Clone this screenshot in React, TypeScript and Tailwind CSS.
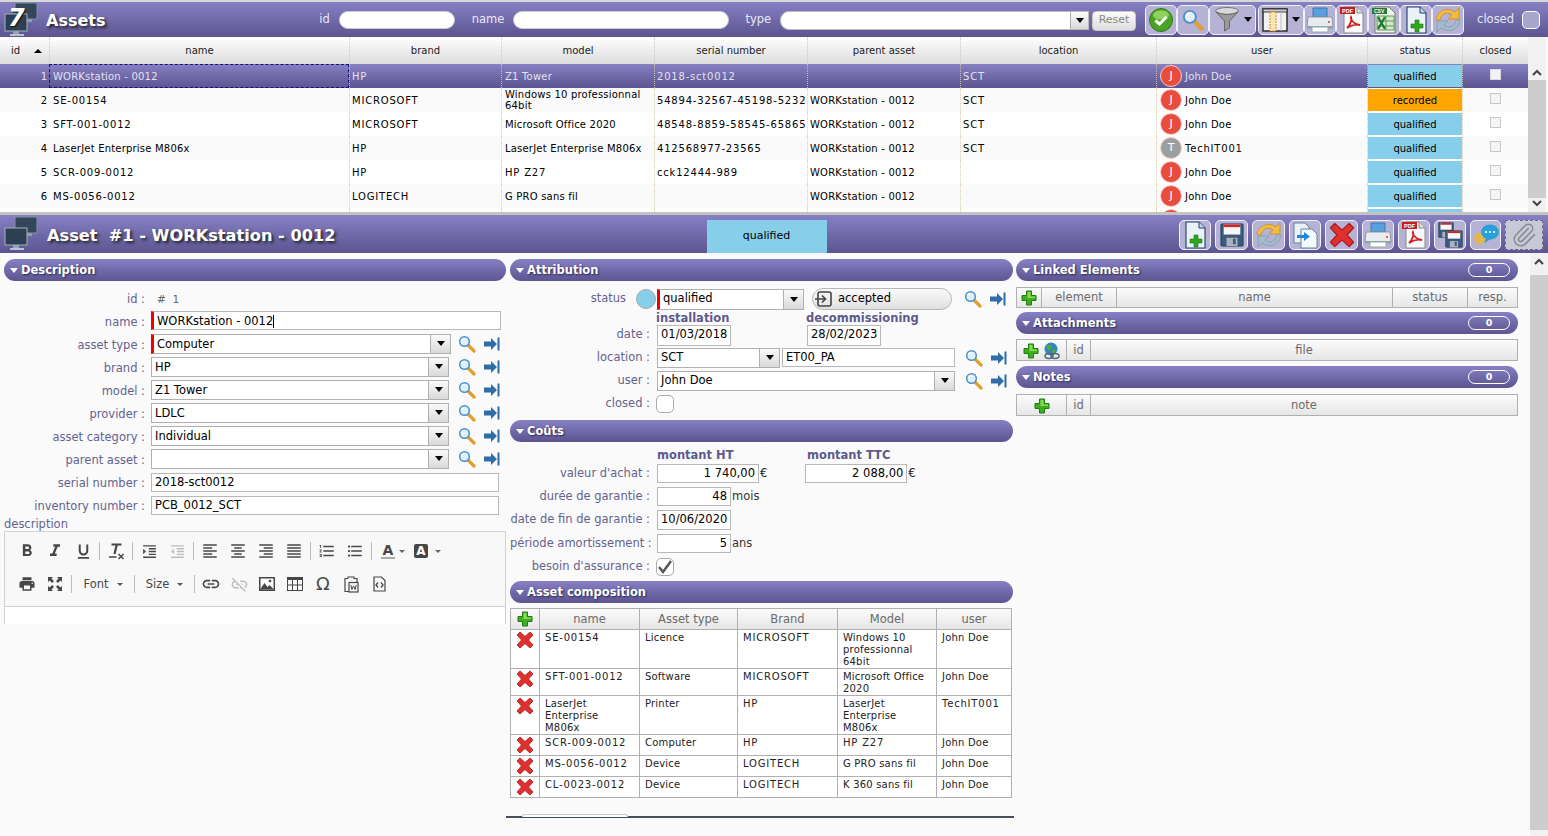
import React from "react";
import {
  MdFormatBold, MdFormatItalic, MdFormatUnderlined, MdFormatIndentIncrease, MdFormatIndentDecrease,
  MdFormatAlignLeft, MdFormatAlignCenter, MdFormatAlignRight, MdFormatAlignJustify, MdFormatListNumbered, MdFormatListBulleted,
  MdPrint, MdLink, MdLinkOff,
} from "react-icons/md";
import { Paperclip } from "lucide-react";

const grad = "bg-gradient-to-b from-[#8780c4] to-[#5c5590]";
const sectionShadow = "[text-shadow:1px_1px_2px_#2a2650]";

function T({ children }: { children: string }) {
  const n = (children.match(/[A-Z0-9]/g) || []).length;
  const ratio = children.length ? n / children.length : 0;
  return <span style={{ letterSpacing: ratio > 0.6 ? "0.8px" : "0.2px" }} className="whitespace-pre-line">{children}</span>;
}

function Monitors({ seven }: { seven?: boolean }) {
  return (
    <div className="relative w-[38px] h-[36px] shrink-0">
      <svg width="38" height="36" viewBox="0 0 38 36">
        <rect x="13" y="1" width="22" height="16" fill="#33465a" stroke="#7f93a3" />
        <rect x="24" y="17" width="6" height="3" fill="#8f9dab" />
        <rect x="3" y="12" width="22" height="17" fill="#2d3f52" stroke="#a4b2bd" />
        <rect x="11" y="29" width="6" height="3" fill="#9aa6b1" />
        <rect x="8" y="32" width="14" height="2" fill="#b8c2ca" />
      </svg>
      {seven && (
        <span className="absolute left-[6px] top-[3px] text-[24px] leading-[26px] italic font-bold text-white [text-shadow:1px_1px_1px_#111]">7</span>
      )}
    </div>
  );
}

const SearchIcon = () => (
  <svg width="18" height="18" viewBox="0 0 18 18" className="shrink-0">
    <path d="M10 10 L16 16" stroke="#e0a030" strokeWidth="3.2" strokeLinecap="round" />
    <circle cx="6.5" cy="6.5" r="4.8" fill="#dff0fb" stroke="#4a8fcb" strokeWidth="1.5" />
    <path d="M3.8 6 a3 3 0 0 1 2.8 -2.4" stroke="#fff" strokeWidth="1.3" fill="none" />
  </svg>
);
const GotoIcon = () => (
  <svg width="16" height="14" viewBox="0 0 16 14" className="shrink-0">
    <path d="M0 4.5 H7 V1 L13 7 L7 13 V9.5 H0 Z" fill="#2f6da8" />
    <rect x="13.5" y="0.5" width="2" height="13" fill="#2f6da8" />
  </svg>
);
const Plus = ({ s = 16 }: { s?: number }) => (
  <svg width={s} height={s} viewBox="0 0 16 16" className="shrink-0">
    <path d="M5.5 1 H10.5 V5.5 H15 V10.5 H10.5 V15 H5.5 V10.5 H1 V5.5 H5.5 Z" fill="#3fae1e" stroke="#1f7d10" strokeWidth="1" />
    <path d="M6.5 2 H9.5 V6.5 H14 V8 H6.5 Z" fill="#86dc55" />
  </svg>
);
const RedX = ({ s = 18 }: { s?: number }) => (
  <svg width={s} height={s} viewBox="0 0 18 18" className="shrink-0">
    <path d="M4 1 L9 5.5 L14 1 L17 4 L12.5 9 L17 14 L14 17 L9 12.5 L4 17 L1 14 L5.5 9 L1 4 Z" fill="#e02f2f" stroke="#a81818" strokeWidth="0.8" strokeLinejoin="round" />
  </svg>
);
const CheckCircle = () => (
  <svg width="26" height="26" viewBox="0 0 26 26">
    <circle cx="13" cy="13" r="11.5" fill="#4aa324" stroke="#2f7d12" />
    <ellipse cx="13" cy="8" rx="8" ry="4.5" fill="#8ed25d" />
    <path d="M7.5 13.5 L11.5 17 L18.5 10" stroke="#fff" strokeWidth="3" fill="none" />
  </svg>
);
const Funnel = () => (
  <svg width="26" height="28" viewBox="0 0 26 28">
    <ellipse cx="13" cy="5" rx="11.5" ry="3.5" fill="#d8d8d8" stroke="#777" />
    <path d="M2 6 L10.5 15 V25 L15.5 22 V15 L24 6 Q13 11 2 6 Z" fill="#9a9a9a" stroke="#666" />
  </svg>
);
const ColumnsIcon = () => (
  <svg width="26" height="26" viewBox="0 0 26 26">
    <rect x="1" y="2" width="24" height="22" fill="#f2f2f2" stroke="#222" strokeWidth="1.4" />
    <rect x="1" y="2" width="24" height="3" fill="#ccc" stroke="#222" strokeWidth="0.8" />
    <rect x="8" y="5" width="6" height="19" fill="#f7e6b8" stroke="#d88f1a" strokeDasharray="2 1" />
    <path d="M19 5 V24" stroke="#bbb" />
  </svg>
);
const Printer = () => (
  <svg width="28" height="26" viewBox="0 0 28 26">
    <path d="M7 1 H21 V10 H7 Z" fill="#5aa0dc" stroke="#3b78ad" />
    <path d="M2 10 H26 L27 20 H1 Z" fill="#e8ecef" stroke="#8b98a3" />
    <rect x="1" y="19" width="26" height="2.5" fill="#8fa0ad" />
    <rect x="6" y="20" width="16" height="5" fill="#fff" stroke="#9aa" />
    <circle cx="23" cy="15" r="1" fill="#d33" />
  </svg>
);
const PdfDoc = () => (
  <svg width="24" height="28" viewBox="0 0 24 28">
    <path d="M4 1 H17 L23 7 V27 H4 Z" fill="#fbfbfb" stroke="#888" />
    <path d="M17 1 V7 H23" fill="#ddd" stroke="#888" />
    <rect x="0" y="1" width="15" height="7" fill="#c91c1c" />
    <text x="2" y="7" fontSize="5.5" fontWeight="700" fill="#fff" fontFamily="Liberation Sans">PDF</text>
    <path d="M7 22 C11 18 12 13 11 11 C10 13 14 19 20 19 C15 18 10 20 7 22 Z" fill="none" stroke="#d02020" strokeWidth="1.8" />
  </svg>
);
const ExcelDoc = () => (
  <svg width="24" height="28" viewBox="0 0 24 28">
    <path d="M3 1 H17 L23 7 V27 H3 Z" fill="#f0f4ee" stroke="#777" />
    <rect x="0" y="2" width="15" height="6" fill="#27773a" />
    <text x="2" y="7" fontSize="5" fontWeight="700" fill="#fff" fontFamily="Liberation Sans">CSV</text>
    <path d="M5 10 H22 V24 H5 Z" fill="#d5e8cd" stroke="#5f9a54" />
    <path d="M14 10 V24 M5 15 H22 M5 20 H22" stroke="#5f9a54" />
    <path d="M6 11 L13 23 M13 11 L6 23" stroke="#1e7a2e" strokeWidth="2.2" />
  </svg>
);
const NewDoc = () => (
  <svg width="24" height="28" viewBox="0 0 24 28">
    <path d="M3 1 H16 L22 7 V27 H3 Z" fill="#eaf1f8" stroke="#1d3f6d" strokeWidth="1.1" />
    <path d="M16 1 V7 H22" fill="#c8d8e8" stroke="#1d3f6d" />
    <path d="M11 14 H15 V18 H19 V22 H15 V26 H11 V22 H7 V18 H11 Z" fill="#2fa61c" stroke="#1b7a10" strokeWidth="0.6" />
  </svg>
);
const Refresh = () => (
  <svg width="28" height="28" viewBox="0 0 28 28">
    <path d="M2 14 C3 5 13 0 21 6 L25 2 V13 H14 L18 9 C13 5 7 8 6 14 Z" fill="#f3bb3f" stroke="#c48a18" strokeWidth="0.7" />
    <path d="M26 14 C25 23 15 28 7 22 L3 26 V15 H14 L10 19 C15 23 21 20 22 14 Z" fill="#a3bccb" stroke="#7e98a8" strokeWidth="0.7" />
  </svg>
);
const Floppy = ({ s = 26 }: { s?: number }) => (
  <svg width={s} height={s} viewBox="0 0 26 26">
    <rect x="1" y="1" width="24" height="24" rx="1" fill="#3c5a7c" stroke="#233b57" />
    <rect x="4" y="1.5" width="18" height="11" fill="#f8f8f8" />
    <rect x="4" y="1.5" width="18" height="3" fill="#c92a2a" />
    <rect x="7" y="16" width="12" height="9" fill="#a9b4bf" />
    <rect x="14" y="17" width="3" height="6" fill="#3c5a7c" />
  </svg>
);
const CopyDoc = () => (
  <svg width="26" height="28" viewBox="0 0 26 28">
    <path d="M2 2 H13 L17 6 V22 H2 Z" fill="#eaf1f8" stroke="#69839c" />
    <path d="M9 8 H20 L25 13 V27 H9 Z" fill="#f6f9fc" stroke="#69839c" />
    <path d="M5 14 H12 V11 L18 15.5 L12 20 V17 H5 Z" fill="#1c87e0" />
  </svg>
);
const DoubleFloppy = () => (
  <div className="relative w-[24px] h-[26px]">
    <div className="absolute left-0 top-0"><Floppy s={16} /></div>
    <div className="absolute left-[7px] top-[8px]"><Floppy s={18} /></div>
  </div>
);
const Chat = () => (
  <svg width="28" height="24" viewBox="0 0 28 24">
    <ellipse cx="9" cy="15" rx="7" ry="5.5" fill="#e4b74e" />
    <path d="M5 19 L3 23 L9 20 Z" fill="#e4b74e" />
    <ellipse cx="18" cy="9" rx="9" ry="7.5" fill="#29a0d8" />
    <path d="M14 15 L12 20 L19 16 Z" fill="#29a0d8" />
    <circle cx="14" cy="9" r="1.1" fill="#fff" /><circle cx="18" cy="9" r="1.1" fill="#fff" /><circle cx="22" cy="9" r="1.1" fill="#fff" />
  </svg>
);
const GlobeLink = () => (
  <svg width="18" height="18" viewBox="0 0 18 18" className="shrink-0">
    <circle cx="8" cy="7" r="6.5" fill="#2f86c9" />
    <path d="M3 4 L7 2.5 L9 5 L6.5 8.5 L4 7 Z M9 8 L13 7 L12 11 L9.5 12 Z" fill="#4fae2c" />
    <ellipse cx="6" cy="14" rx="4" ry="2.4" fill="none" stroke="#52657a" strokeWidth="1.5" />
    <ellipse cx="12" cy="14" rx="4" ry="2.4" fill="none" stroke="#52657a" strokeWidth="1.5" />
  </svg>
);
const Caret = () => <span className="w-0 h-0 border-x-[4px] border-x-transparent border-t-[5px] border-t-black" />;

/* CKEditor glyphs the icon packs lack */
const ClearFormat = () => (
  <svg width="18" height="18" viewBox="0 0 18 18" fill="none" stroke="#474747">
    <path d="M4.5 2.5 H14.5" strokeWidth="2" />
    <path d="M9.8 2.5 L7.5 12" strokeWidth="2.2" />
    <path d="M2 15 H9.5" strokeWidth="1.5" />
    <path d="M11.5 12 L16.5 17 M16.5 12 L11.5 17" strokeWidth="1.5" />
  </svg>
);
const Expand = () => (
  <svg width="16" height="16" viewBox="0 0 16 16" fill="#474747">
    <path d="M1 1 H6 L4.4 2.6 L7 5.2 L5.2 7 L2.6 4.4 L1 6 Z" />
    <path d="M15 1 V6 L13.4 4.4 L10.8 7 L9 5.2 L11.6 2.6 L10 1 Z" />
    <path d="M1 15 V10 L2.6 11.6 L5.2 9 L7 10.8 L4.4 13.4 L6 15 Z" />
    <path d="M15 15 H10 L11.6 13.4 L9 10.8 L10.8 9 L13.4 11.6 L15 10 Z" />
  </svg>
);
const ImageIc = () => (
  <svg width="16" height="14" viewBox="0 0 16 14">
    <rect x="0.75" y="0.75" width="14.5" height="12.5" fill="#fff" stroke="#474747" strokeWidth="1.5" />
    <path d="M1 12.5 L5.5 6 L8.5 10 L10.5 8 L15 12.5 Z" fill="#474747" />
    <circle cx="11" cy="4" r="1.3" fill="#474747" />
  </svg>
);
const PasteWord = () => (
  <svg width="15" height="17" viewBox="0 0 15 17" fill="none" stroke="#474747" strokeWidth="1.2">
    <path d="M4 2.5 H1 V15.5 H5" />
    <path d="M4 2.5 V1 H10 V2.5 H13 V6" />
    <rect x="5" y="6.5" width="9" height="9.5" />
    <path d="M6.8 9 L7.9 13.5 L9.5 10 L11.1 13.5 L12.2 9" strokeWidth="1" />
  </svg>
);
const SourceDoc = () => (
  <svg width="13" height="16" viewBox="0 0 13 16" fill="none" stroke="#474747" strokeWidth="1.2">
    <path d="M1 1 H8.5 L12 4.5 V15 H1 Z" />
    <path d="M5 6.5 L3 9 L5 11.5 M8 6.5 L10 9 L8 11.5" strokeWidth="1.3" />
  </svg>
);

function ToolBtn({ w, children, dashed }: { w: number; children: React.ReactNode; dashed?: boolean }) {
  return (
    <div
      style={{ width: w }}
      className={`h-[30px] shrink-0 flex items-center justify-center gap-[4px] rounded-[5px] border bg-[#b6b2d6] ${dashed ? "border-dashed border-[#6a6a8a] bg-[#c9c8d6] rounded-none" : "border-[#f1f0f8]"}`}
    >
      {children}
    </div>
  );
}

const cols = [49, 300, 152, 153, 153, 153, 196, 211, 95, 66];
const rows = [
  ["1", "WORKstation - 0012", "HP", "Z1 Tower", "2018-sct0012", "", "SCT", "John Doe", "qualified"],
  ["2", "SE-00154", "MICROSOFT", "Windows 10 professionnal 64bit", "54894-32567-45198-5232", "WORKstation - 0012", "SCT", "John Doe", "recorded"],
  ["3", "SFT-001-0012", "MICROSOFT", "Microsoft Office 2020", "48548-8859-58545-65865", "WORKstation - 0012", "SCT", "John Doe", "qualified"],
  ["4", "LaserJet Enterprise M806x", "HP", "LaserJet Enterprise M806x", "412568977-23565", "WORKstation - 0012", "SCT", "TechIT001", "qualified"],
  ["5", "SCR-009-0012", "HP", "HP Z27", "cck12444-989", "WORKstation - 0012", "", "John Doe", "qualified"],
  ["6", "MS-0056-0012", "LOGITECH", "G PRO sans fil", "", "WORKstation - 0012", "", "John Doe", "qualified"],
  ["7", "CL-0023-0012", "LOGITECH", "K 360 sans fil", "", "WORKstation - 0012", "", "John Doe", "qualified"],
];

function ScrollBar({ h, thumbTop, thumbH }: { h: number; thumbTop: number; thumbH: number }) {
  return (
    <div style={{ height: h }} className="w-[18px] shrink-0 bg-[#f1f1f1] relative">
      <svg width="18" height="18" viewBox="0 0 18 18" className="absolute top-0 left-0">
        <path d="M5 11 L9 7 L13 11" stroke="#444" strokeWidth="2" fill="none" />
      </svg>
      <div style={{ top: thumbTop, height: thumbH }} className="absolute left-0 w-[18px] bg-[#cdcdcd]" />
      {h < 200 && (
        <svg width="18" height="18" viewBox="0 0 18 18" className="absolute bottom-0 left-0">
          <path d="M5 7 L9 11 L13 7" stroke="#444" strokeWidth="2" fill="none" />
        </svg>
      )}
    </div>
  );
}

function GridRow({ r, idx }: { r: string[]; idx: number }) {
  const sel = idx === 0;
  const txt = sel ? "text-[#e2e2f0]" : "text-black";
  const bg = sel ? grad : idx % 2 === 1 ? "bg-[#fafafa]" : "bg-white";
  const dot = sel ? "border-l border-dotted border-[#c9bfa6]" : "border-l border-dotted border-[#dccfae]";
  return (
    <div className={`flex h-[24px] text-[10px] ${bg} ${txt}`}>
      <div style={{ width: cols[0] }} className="flex items-center justify-end pr-[2px]">{r[0]}</div>
      <div style={{ width: cols[1] }} className={`flex items-center ${sel ? "pl-[3px] border border-dashed border-[#14107a]" : "pl-[4px]"}`}><T>{r[1]}</T></div>
      {[2, 3, 4, 5, 6].map((c) => (
        <div key={c} style={{ width: cols[c] }} className={`flex items-center ${c === 3 ? "pl-[3px]" : "pl-[2px]"} leading-[11px] ${dot}`}><T>{r[c]}</T></div>
      ))}
      <div style={{ width: cols[7] }} className={`flex items-center pl-[3px] gap-[2px] ${dot}`}>
        <span className={`w-[22px] h-[22px] rounded-full border border-[#f3d0cc] flex items-center justify-center text-white text-[11px] ${r[7] === "TechIT001" ? "bg-[#9a9f9f]" : "bg-[#e74c3c]"}`}>
          {r[7][0]}
        </span>
        <span className="ml-[1px]"><T>{r[7]}</T></span>
      </div>
      <div style={{ width: cols[8] }} className={`py-px ${dot}`}>
        <div className={`h-full flex items-center justify-center text-black ${r[8] === "recorded" ? "bg-[#ffa500]" : "bg-[#87ceeb]"}`}>{r[8]}</div>
      </div>
      <div style={{ width: cols[9] }} className={`flex items-start justify-center pt-[5px] ${dot}`}>
        <span className={`w-[11px] h-[11px] border ${sel ? "bg-[#f2f2f2] border-[#d8d8e4]" : "bg-[#f4f4f4] border-[#c8c8c8]"}`} />
      </div>
    </div>
  );
}

function Section({ title, badge }: { title: string; badge?: boolean }) {
  return (
    <div className={`h-[22px] rounded-[11px] ${grad} flex items-center pl-[6px] pr-[8px] shrink-0`}>
      <span className="w-0 h-0 border-x-[4px] border-x-transparent border-t-[5px] border-t-white mr-[3px]" />
      <span className={`text-white font-bold text-[11.5px] pt-px ${sectionShadow}`}>{title}</span>
      {badge && (
        <span className="ml-auto w-[42px] h-[14px] rounded-[7px] border border-white flex items-center justify-center text-white font-bold text-[9.5px]">0</span>
      )}
    </div>
  );
}

function Sel({ w, h = 20, text, req, low }: { w: number; h?: number; text: string; req?: boolean; low?: boolean }) {
  return (
    <div style={{ width: w, height: h }} className={`shrink-0 flex bg-white border border-[#b0b0b0] text-[11.5px] text-black ${req ? "border-l-[3px] border-l-[#ee0000]" : ""}`}>
      <span className={`flex-1 flex items-center pl-[3px] overflow-hidden ${low ? "pt-[2px]" : ""}`}>{text}</span>
      <span className="w-[20px] border-l border-[#b0b0b0] bg-gradient-to-b from-[#fafafa] to-[#d9d9d9] flex items-center justify-center"><Caret /></span>
    </div>
  );
}
function Inp({ w, h = 19, text, right, req, cursor, low }: { w: number; h?: number; text: string; right?: boolean; req?: boolean; cursor?: boolean; low?: boolean }) {
  return (
    <div style={{ width: w, height: h }} className={`shrink-0 flex items-center bg-white border border-[#b8b8b8] text-[11.5px] text-black px-[3px] ${low ? "pt-[2px]" : ""} ${right ? "justify-end" : ""} ${req ? "border-l-[3px] border-l-[#ee0000]" : ""}`}>
      {text}
      {cursor && <span className="w-px h-[13px] bg-black" />}
    </div>
  );
}
const labelCls = "shrink-0 text-right whitespace-nowrap text-[11.5px] text-[#64628e] pr-[6px] pt-[4px]";
const label2 = "w-[147px] shrink-0 text-right whitespace-nowrap text-[11.5px] text-[#64628e] pr-[7px]";

function LeftRow({ label, children }: { label: string; children: React.ReactNode }) {
  return (
    <div className="flex items-center h-[23.07px]">
      <div className={`w-[151px] ${labelCls}`}>{label}</div>
      {children}
    </div>
  );
}
const Tools = ({ ml = 9 }: { ml?: number }) => (
  <>
    <span style={{ marginLeft: ml }}><SearchIcon /></span>
    <span className="ml-[8px]"><GotoIcon /></span>
  </>
);

function SelRow({ label, text }: { label: string; text: string }) {
  return (
    <LeftRow label={label}>
      <Sel w={298} text={text} low />
      <Tools />
    </LeftRow>
  );
}

const Sep = () => <span className="w-px h-[18px] bg-[#bcbcbc] mx-[2px] shrink-0" />;
const Ed = ({ children, w = 28, dim }: { children: React.ReactNode; w?: number; dim?: boolean }) => (
  <span style={{ width: w }} className={`shrink-0 flex justify-center items-center ${dim ? "text-[#bdbdbd]" : "text-[#474747]"}`}>{children}</span>
);

function CellHead({ w, children, grow }: { w?: number; children?: React.ReactNode; grow?: boolean }) {
  return (
    <div style={grow ? undefined : { width: w }} className={`${grow ? "flex-1" : "shrink-0"} h-full pt-px flex items-center justify-center gap-[4px] text-[11.5px] text-[#6b6b6b] border-r border-[#b0b0b0] last:border-r-0`}>
      {children}
    </div>
  );
}
function HeadBar({ children, h = 21 }: { children: React.ReactNode; h?: number }) {
  return (
    <div style={{ height: h }} className="flex border border-[#b0b0b0] bg-gradient-to-b from-[#fbfbfb] to-[#e6e6e6] shrink-0">{children}</div>
  );
}

const compCols = [29, 100, 98, 100, 99];
const comp = [
  { h: 39, c: ["SE-00154", "Licence", "MICROSOFT", "Windows 10\nprofessionnal\n64bit", "John Doe"] },
  { h: 27, c: ["SFT-001-0012", "Software", "MICROSOFT", "Microsoft Office\n2020", "John Doe"] },
  { h: 39, c: ["LaserJet\nEnterprise\nM806x", "Printer", "HP", "LaserJet\nEnterprise\nM806x", "TechIT001"] },
  { h: 21, c: ["SCR-009-0012", "Computer", "HP", "HP Z27", "John Doe"] },
  { h: 21, c: ["MS-0056-0012", "Device", "LOGITECH", "G PRO sans fil", "John Doe"] },
  { h: 21, c: ["CL-0023-0012", "Device", "LOGITECH", "K 360 sans fil", "John Doe"] },
];

export default function App() {
  return (
    <div className="w-[1548px] h-[836px] overflow-hidden bg-[#fafafa] flex flex-col font-['DejaVu_Sans','Liberation_Sans',sans-serif]">
      {/* list header */}
      <div className="h-[2px] bg-[#d8d8d8] shrink-0" />
      <div className={`h-[35px] shrink-0 ${grad} flex items-center pl-[2px] pr-[8px] text-[#e8e8f4]`}>
        <Monitors seven />
        <span className="ml-[6px] pt-[3px] text-white font-bold text-[16px] [text-shadow:2px_2px_3px_#222]">Assets</span>
        <span className="ml-auto mt-px text-[11.5px]">id</span>
        <span className="ml-[9px] mt-px w-[116px] h-[18px] rounded-[9px] bg-white border border-[#ccc]" />
        <span className="ml-[17px] mt-px text-[11.5px]">name</span>
        <span className="ml-[9px] mt-px w-[216px] h-[18px] rounded-[9px] bg-white border border-[#ccc]" />
        <span className="ml-[16px] mt-px text-[11.5px]">type</span>
        <span className="ml-[9px] mt-px w-[309px] h-[19px] bg-white border border-[#bbb] rounded-l-[9px] flex justify-end">
          <span className="w-[18px] border-l border-[#b0b0b0] bg-gradient-to-b from-[#fafafa] to-[#d9d9d9] flex items-center justify-center"><Caret /></span>
        </span>
        <span className="ml-[3px] mt-[2px] w-[44px] h-[20px] rounded-[4px] border border-[#c8c8c8] bg-gradient-to-b from-[#fbfbfb] to-[#dedede] flex items-center justify-center text-[11px] text-[#888]">Reset</span>
        <div className="ml-[9px] flex">
          <ToolBtn w={32}><CheckCircle /></ToolBtn>
          <ToolBtn w={32}><div className="scale-125"><SearchIcon /></div></ToolBtn>
          <ToolBtn w={47}><Funnel /><Caret /></ToolBtn>
          <div className="w-[2px]" />
          <ToolBtn w={46}><ColumnsIcon /><Caret /></ToolBtn>
          <ToolBtn w={32}><Printer /></ToolBtn>
          <ToolBtn w={32}><PdfDoc /></ToolBtn>
          <ToolBtn w={32}><ExcelDoc /></ToolBtn>
          <ToolBtn w={32}><NewDoc /></ToolBtn>
          <ToolBtn w={32}><Refresh /></ToolBtn>
        </div>
        <span className="ml-[13px] mt-px text-[11.5px]">closed</span>
        <span className="ml-[8px] mt-px w-[18px] h-[18px] rounded-[5px] border border-white bg-[#a9a6cd]" />
      </div>

      {/* grid */}
      <div className="flex h-[175px] shrink-0">
        <div className="w-[1528px] shrink-0 overflow-hidden">
          <div className="flex h-[27px] bg-gradient-to-b from-[#ffffff] to-[#dcdcdc] text-[10px] text-[#222]">
            {["id", "name", "brand", "model", "serial number", "parent asset", "location", "user", "status", "closed"].map((t, i) => (
              <div key={t} style={{ width: cols[i] }} className={`flex items-center justify-center relative ${i === 0 ? "pr-[18px]" : "border-l border-dotted border-[#c9c9c9]"}`}>
                {t}
                {i === 0 && <span className="absolute left-[34px] top-[12px] w-0 h-0 border-x-[4px] border-x-transparent border-b-[4px] border-b-black" />}
              </div>
            ))}
          </div>
          <div className="h-[148px] overflow-hidden">
            {rows.map((r, i) => <GridRow key={r[0]} r={r} idx={i} />)}
          </div>
        </div>
        <div className="flex flex-col">
          <div className="h-[27px] w-[18px] bg-[#f1f1f1]" />
          <ScrollBar h={148} thumbTop={16} thumbH={118} />
        </div>
      </div>

      {/* splitter */}
      <div className="h-[3px] shrink-0 bg-[#c4c4c4] flex justify-center items-center">
        <span className="text-[6px] leading-[3px] text-[#777] tracking-[1px]">.....</span>
      </div>

      {/* detail header */}
      <div className={`h-[38px] shrink-0 ${grad} flex items-center pl-[2px] pr-[5px]`}>
        <Monitors />
        <span className="ml-[7px] pt-[4px] whitespace-pre text-white font-bold text-[16.2px] [text-shadow:2px_2px_3px_#222]">Asset  #1 - WORKstation - 0012</span>
        <div className="ml-[371px] w-[120px] h-[33px] bg-[#87ceeb] flex items-center justify-center text-[11px] text-black self-end">qualified</div>
        <div className="ml-auto mt-[2px] flex gap-[4px] items-center">
          <ToolBtn w={32}><NewDoc /></ToolBtn>
          <ToolBtn w={33}><Floppy s={24} /></ToolBtn>
          <ToolBtn w={33}><Refresh /></ToolBtn>
          <ToolBtn w={32}><CopyDoc /></ToolBtn>
          <ToolBtn w={33}><RedX s={26} /></ToolBtn>
          <ToolBtn w={32}><Printer /></ToolBtn>
          <ToolBtn w={32}><PdfDoc /></ToolBtn>
          <ToolBtn w={32}><DoubleFloppy /></ToolBtn>
          <ToolBtn w={31}><Chat /></ToolBtn>
          <ToolBtn w={38} dashed><Paperclip size={26} strokeWidth={1.4} className="text-[#8a8a94]" /></ToolBtn>
        </div>
      </div>

      {/* body */}
      <div className="flex flex-1 min-h-0">
        <div className="w-[1530px] shrink-0 flex pt-[6px] pl-[4px] overflow-hidden">
          {/* Column 1 */}
          <div className="w-[502px] shrink-0 flex flex-col">
            <Section title="Description" />
            <div className="flex flex-col pt-[5px] -ml-[4px]">
              <div className="flex items-center h-[23.07px]">
                <div className={`w-[151px] ${labelCls}`}>id :</div>
                <span className="text-[10.5px] text-[#666] ml-[6px] pt-[4px]">#&nbsp;&nbsp;1</span>
              </div>
              <LeftRow label="name :"><Inp w={350} text="WORKstation - 0012" req cursor low /></LeftRow>
              <LeftRow label="asset type :"><Sel w={300} text="Computer" req low /><Tools ml={7} /></LeftRow>
              <SelRow label="brand :" text="HP" />
              <SelRow label="model :" text="Z1 Tower" />
              <SelRow label="provider :" text="LDLC" />
              <SelRow label="asset category :" text="Individual" />
              <SelRow label="parent asset :" text="" />
              <LeftRow label="serial number :"><Inp w={348} text="2018-sct0012" low /></LeftRow>
              <LeftRow label="inventory number :"><Inp w={348} text="PCB_0012_SCT" low /></LeftRow>
            </div>
            <div className="text-[11.5px] leading-[14px] text-[#64628e]">description</div>
            <div className="border border-b-0 border-[#d1d1d1] bg-[#f8f8f8] h-[93px] flex flex-col">
              <div className="h-[75px] shrink-0 px-[4px] pt-[8px] flex flex-col gap-[10px] border-b border-[#d1d1d1]">
                <div className="flex items-center h-[23px] pl-[4px]">
                  <Ed><MdFormatBold size={20} /></Ed>
                  <Ed><MdFormatItalic size={20} /></Ed>
                  <Ed><MdFormatUnderlined size={19} /></Ed>
                  <Sep />
                  <Ed><ClearFormat /></Ed>
                  <Sep />
                  <Ed><MdFormatIndentIncrease size={17} /></Ed>
                  <Ed dim><MdFormatIndentDecrease size={17} /></Ed>
                  <Sep />
                  <Ed><MdFormatAlignLeft size={18} /></Ed>
                  <Ed><MdFormatAlignCenter size={18} /></Ed>
                  <Ed><MdFormatAlignRight size={18} /></Ed>
                  <Ed><MdFormatAlignJustify size={18} /></Ed>
                  <Sep />
                  <Ed><MdFormatListNumbered size={18} /></Ed>
                  <Ed><MdFormatListBulleted size={18} /></Ed>
                  <Sep />
                  <Ed><span className="text-[14px] font-bold border-b-2 border-[#aaa] leading-[14px] px-[2px]">A</span></Ed>
                  <span className="w-0 h-0 border-x-[3px] border-x-transparent border-t-[3px] border-t-[#666] -ml-[3px]" />
                  <span className="ml-[9px] w-[14px] h-[14px] rounded-[2px] bg-[#474747] text-white text-[12px] leading-[14px] font-bold flex justify-center">A</span>
                  <span className="ml-[7px] w-0 h-0 border-x-[3px] border-x-transparent border-t-[3px] border-t-[#666]" />
                  <span className="ml-[4px]"><Sep /></span>
                </div>
                <div className="flex items-center h-[23px] pl-[4px]">
                  <Ed><MdPrint size={18} /></Ed>
                  <Ed><Expand /></Ed>
                  <Sep />
                  <span className="w-[58px] shrink-0 flex items-center justify-center gap-[8px] text-[11.5px] text-[#474747]">Font<span className="w-0 h-0 border-x-[3px] border-x-transparent border-t-[3px] border-t-[#555]" /></span>
                  <Sep />
                  <span className="w-[55px] shrink-0 flex items-center justify-center gap-[8px] text-[11.5px] text-[#474747]">Size<span className="w-0 h-0 border-x-[3px] border-x-transparent border-t-[3px] border-t-[#555]" /></span>
                  <Sep />
                  <Ed><MdLink size={20} /></Ed>
                  <Ed dim><MdLinkOff size={19} /></Ed>
                  <Ed><ImageIc /></Ed>
                  <Ed>
                    <svg width="16" height="14" viewBox="0 0 16 14"><rect x="0.5" y="0.5" width="15" height="13" fill="none" stroke="#474747" /><rect x="0" y="0" width="16" height="3" fill="#474747" /><path d="M5.5 3V14M10.5 3V14M0 8H16" stroke="#474747" /></svg>
                  </Ed>
                  <Ed><span className="text-[18px] font-medium leading-none">Ω</span></Ed>
                  <Ed><PasteWord /></Ed>
                  <Ed><SourceDoc /></Ed>
                </div>
              </div>
              <div className="flex-1 bg-white" />
            </div>
          </div>

          {/* Column 2 */}
          <div className="w-[503px] shrink-0 ml-[4px] flex flex-col">
            <Section title="Attribution" />
            <div className="flex items-center h-[24px] mt-[6px]">
              <div className="w-[116px] text-right text-[11.5px] text-[#64628e]">status</div>
              <span className="ml-[10px] w-[20px] h-[20px] rounded-full bg-[#87ceeb] border border-[#a9a9a9] shrink-0" />
              <span className="ml-px"><Sel w={147} h={21} text="qualified" req /></span>
              <span className="ml-[8px] w-[140px] h-[22px] rounded-[11px] border border-[#b8b8b8] bg-gradient-to-b from-[#fafafa] to-[#e0e0e0] flex items-center pl-[1px] text-[11.5px] text-black">
                <svg width="20" height="18" viewBox="0 0 20 18" className="mr-[4px]"><rect x="4" y="2" width="13" height="14" rx="2" fill="none" stroke="#444" strokeWidth="1.6" /><path d="M1 9 H11 M8 5.5 L11.5 9 L8 12.5" stroke="#444" strokeWidth="1.6" fill="none" /></svg>
                accepted
              </span>
              <span className="ml-[12px]"><SearchIcon /></span>
              <span className="ml-[8px]"><GotoIcon /></span>
            </div>
            <div className="flex text-[11.5px] leading-[14px] font-bold text-[#5d5a8d] h-[13px] pl-[146px]">
              <span className="w-[150px]">installation</span>
              <span>decommissioning</span>
            </div>
            <div className="flex items-center h-[22px]">
              <div className={label2}>date :</div>
              <Inp w={74} h={21} text="01/03/2018" />
              <span className="ml-[76px]"><Inp w={74} h={21} text="28/02/2023" /></span>
            </div>
            <div className="flex items-center h-[23px]">
              <div className={label2}>location :</div>
              <Sel w={123} text="SCT" />
              <span className="ml-[2px]"><Inp w={173} text="ET00_PA" /></span>
              <span className="ml-[10px]"><SearchIcon /></span>
              <span className="ml-[8px]"><GotoIcon /></span>
            </div>
            <div className="flex items-center h-[23px]">
              <div className={label2}>user :</div>
              <Sel w={298} text="John Doe" />
              <span className="ml-[10px]"><SearchIcon /></span>
              <span className="ml-[8px]"><GotoIcon /></span>
            </div>
            <div className="flex items-center h-[23px]">
              <div className={label2}>closed :</div>
              <span className="w-[18px] h-[18px] rounded-[5px] border border-[#aaa] bg-white -ml-px" />
            </div>
            <div className="mt-[5px]"><Section title="Coûts" /></div>
            <div className="flex text-[11.5px] leading-[14px] font-bold text-[#5d5a8d] h-[14px] mt-[6px] pl-[147px]">
              <span className="w-[150px]">montant HT</span>
              <span>montant TTC</span>
            </div>
            <div className="flex items-center h-[23px]">
              <div className={label2}>valeur d'achat :</div>
              <Inp w={102} text="1 740,00" right />
              <span className="text-[11.5px] text-[#222] ml-px">€</span>
              <span className="ml-[38px]"><Inp w={102} text="2 088,00" right /></span>
              <span className="text-[11.5px] text-[#222] ml-px">€</span>
            </div>
            <div className="flex items-center h-[23px]">
              <div className={label2}>durée de garantie :</div>
              <Inp w={74} text="48" right />
              <span className="text-[11.5px] text-[#333] ml-px">mois</span>
            </div>
            <div className="flex items-center h-[24px]">
              <div className={label2}>date de fin de garantie :</div>
              <Inp w={74} h={20} text="10/06/2020" />
            </div>
            <div className="flex items-center h-[23px]">
              <div className={label2}>période amortissement :</div>
              <Inp w={74} text="5" right />
              <span className="text-[11.5px] text-[#333] ml-px">ans</span>
            </div>
            <div className="flex items-center h-[23px]">
              <div className={label2}>besoin d'assurance :</div>
              <span className="w-[18px] h-[18px] rounded-[5px] border border-[#aaa] bg-white flex items-center justify-center -ml-px">
                <svg width="16" height="14" viewBox="0 0 16 14"><path d="M2 7 L6 12 L14 1" stroke="#555" strokeWidth="2.4" fill="none" /></svg>
              </span>
            </div>
            <div className="mt-[3px]"><Section title="Asset composition" /></div>
            <div className="mt-[5px] w-[502px] border border-b-0 border-[#b0b0b0] text-[10px] text-[#222]">
              <div className="flex h-[21px] bg-gradient-to-b from-[#fbfbfb] to-[#e6e6e6] border-b border-[#b0b0b0]">
                <div style={{ width: compCols[0] }} className="shrink-0 flex items-center justify-center border-r border-[#b0b0b0]"><Plus /></div>
                {["name", "Asset type", "Brand", "Model", "user"].map((t, i) => (
                  <div key={t} style={i < 4 ? { width: compCols[i + 1] } : undefined} className={`flex items-center justify-center pt-[2px] text-[11.5px] text-[#6b6b6b] ${i < 4 ? "shrink-0 border-r border-[#b0b0b0]" : "flex-1"}`}>{t}</div>
                ))}
              </div>
              {comp.map((row) => (
                <div key={row.c[0]} style={{ height: row.h }} className="flex bg-white border-b border-[#b0b0b0] leading-[12px]">
                  <div style={{ width: compCols[0] }} className="shrink-0 flex justify-center pt-[1px] border-r border-[#b0b0b0]"><RedX /></div>
                  {row.c.map((t, i) => (
                    <div key={i} style={i < 4 ? { width: compCols[i + 1] } : undefined} className={`pl-[5px] pt-[2px] whitespace-nowrap ${i < 4 ? "shrink-0 border-r border-[#b0b0b0]" : "flex-1"}`}><T>{t}</T></div>
                  ))}
                </div>
              ))}
            </div>
            <div className="mt-[16px] -ml-[4px] w-[508px] h-[4px] relative border-b-2 border-[#44505c]">
              <span className="absolute left-[16px] top-0 w-[106px] h-[3px] border border-b-0 border-[#ccc] rounded-t-[6px] bg-white" />
            </div>
          </div>

          {/* Column 3 */}
          <div className="w-[502px] shrink-0 ml-[3px] flex flex-col">
            <Section title="Linked Elements" badge />
            <div className="mt-[6px]">
              <HeadBar>
                <CellHead w={25}><Plus /></CellHead>
                <CellHead w={75}>element</CellHead>
                <CellHead w={276}>name</CellHead>
                <CellHead w={75}>status</CellHead>
                <CellHead grow>resp.</CellHead>
              </HeadBar>
            </div>
            <div className="mt-[4px]"><Section title="Attachments" badge /></div>
            <div className="mt-[5px]">
              <HeadBar h={22}>
                <CellHead w={50}><Plus /><GlobeLink /></CellHead>
                <CellHead w={24}>id</CellHead>
                <CellHead grow>file</CellHead>
              </HeadBar>
            </div>
            <div className="mt-[5px]"><Section title="Notes" badge /></div>
            <div className="mt-[6px]">
              <HeadBar h={22}>
                <CellHead w={50}><Plus /></CellHead>
                <CellHead w={24}>id</CellHead>
                <CellHead grow>note</CellHead>
              </HeadBar>
            </div>
          </div>
        </div>
        <ScrollBar h={583} thumbTop={22} thumbH={555} />
      </div>
    </div>
  );
}
